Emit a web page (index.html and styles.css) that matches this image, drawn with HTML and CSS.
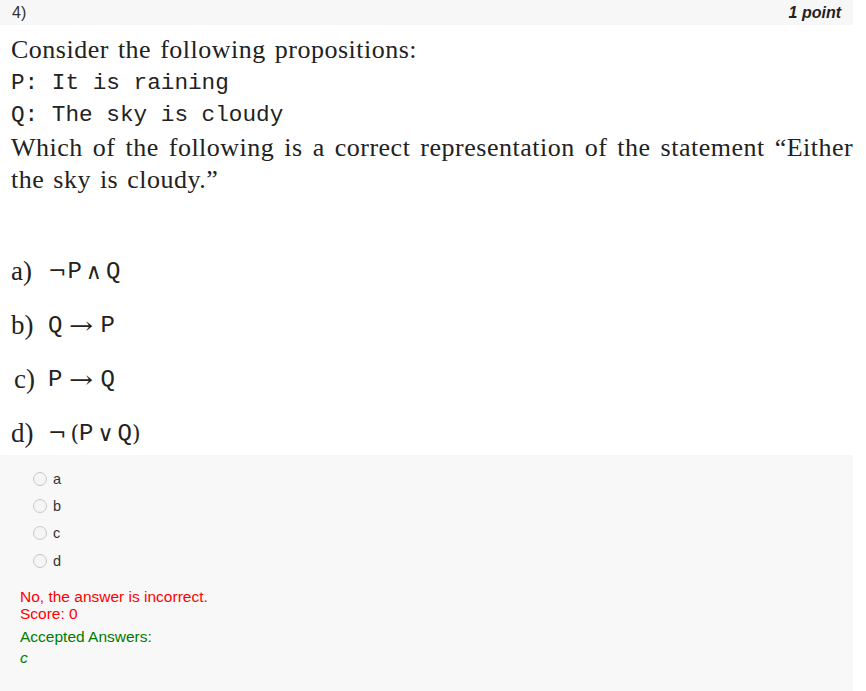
FILE: index.html
```html
<!DOCTYPE html>
<html>
<head>
<meta charset="utf-8">
<link rel="stylesheet" href="styles.css">
</head>
<body>
<div class="page">
  <div class="header">
    <span class="qnum">4)</span>
    <span class="points">1 point</span>
  </div>
  <div class="question">
    <div class="line serif">Consider the following propositions:</div>
    <div class="line mono">P: It is raining</div>
    <div class="line mono">Q: The sky is cloudy</div>
    <div class="line serif wide">Which of the following is a correct representation of the statement “Either</div>
    <div class="line serif">the sky is cloudy.”</div>
    <div class="options">
      <div class="opt"><span class="lbl">a)</span><span class="expr"><span class="sym neg">¬</span><span class="var">P</span><span class="sym op">∧</span><span class="var">Q</span></span></div>
      <div class="opt"><span class="lbl">b)</span><span class="expr"><span class="var">Q</span><span class="sym op arrow">→</span><span class="var">P</span></span></div>
      <div class="opt"><span class="lbl lc">c)</span><span class="expr"><span class="var">P</span><span class="sym op arrow">→</span><span class="var">Q</span></span></div>
      <div class="opt"><span class="lbl">d)</span><span class="expr"><span class="sym neg sp">¬</span><span class="sym paren">(</span><span class="var">P</span><span class="sym op">∨</span><span class="var">Q</span><span class="sym paren">)</span></span></div>
    </div>
  </div>
  <div class="answers">
    <div class="choices">
      <label class="choice"><span class="radio"></span><span>a</span></label>
      <label class="choice"><span class="radio"></span><span>b</span></label>
      <label class="choice"><span class="radio"></span><span>c</span></label>
      <label class="choice"><span class="radio"></span><span>d</span></label>
    </div>
    <div class="feedback">
      <div class="wrong">No, the answer is incorrect.</div>
      <div class="wrong">Score: 0</div>
      <div class="accepted">Accepted Answers:</div>
      <div class="accepted ans">c</div>
    </div>
  </div>
</div>
</body>
</html>
```

FILE: styles.css
```css
html, body {
  margin: 0;
  padding: 0;
  background: #ffffff;
}
body {
  width: 866px;
  height: 691px;
  overflow: hidden;
  font-family: "Liberation Sans", Arial, sans-serif;
  color: #333333;
}
.page {
  width: 853px;
}
.header {
  height: 25px;
  background: #f7f7f7;
  display: flex;
  justify-content: space-between;
  align-items: center;
  padding: 0 12px 0 12px;
  font-size: 16px;
}
.qnum {
  color: #333;
}
.points {
  font-weight: bold;
  font-style: italic;
  color: #222;
}
.question {
  padding: 9px 0 0 11px;
  white-space: nowrap;
  color: #222;
  height: 421px;
}
.line {
  height: 32.5px;
  line-height: 32.5px;
}
.serif {
  font-family: "Liberation Serif", "Times New Roman", serif;
  font-size: 26px;
  letter-spacing: 0.5px;
  word-spacing: 2px;
}
.serif.wide {
  word-spacing: 3px;
}
.mono {
  font-family: "Liberation Mono", "Courier New", monospace;
  font-size: 22.7px;
}
.options {
  margin-top: 48px;
}
.opt {
  height: 54px;
  display: flex;
  align-items: center;
}
.lbl {
  font-family: "Liberation Serif", serif;
  font-size: 27px;
  width: 37px;
}
.lbl.lc {
  padding-left: 3px;
  width: 34px;
}
.expr {
  display: flex;
  align-items: center;
}
.var {
  font-family: "Liberation Mono", monospace;
  font-size: 24px;
}
.sym {
  font-family: "DejaVu Serif", serif;
  font-size: 22px;
}
.sym.op {
  margin: 0 4px;
}
.sym.arrow {
  font-size: 24px;
  transform: scaleX(1.2);
  margin: 0 9px;
}
.sym.neg {
  margin-right: 1px;
}
.sym.neg.sp {
  margin-right: 4px;
}
.answers {
  background: #f8f8f8;
  height: 236px;
  padding: 10px 0 0 20px;
  box-sizing: border-box;
}
.choices {
  padding-left: 13px;
  display: flex;
  flex-direction: column;
}
.choice {
  height: 27.3px;
  display: flex;
  align-items: center;
  font-size: 14.5px;
  color: #333;
}
.radio {
  width: 12px;
  height: 12px;
  border: 1px solid #c9c9c9;
  border-radius: 50%;
  background: #f5f5f5;
  margin-right: 6px;
  box-sizing: content-box;
}
.feedback {
  margin-top: 14px;
  font-size: 15.5px;
}
.wrong {
  color: #ff0000;
  line-height: 17px;
}
.accepted {
  color: #007a00;
  line-height: 17px;
  margin-top: 6px;
}
.accepted.ans {
  font-style: italic;
  margin-top: 4px;
}
```
